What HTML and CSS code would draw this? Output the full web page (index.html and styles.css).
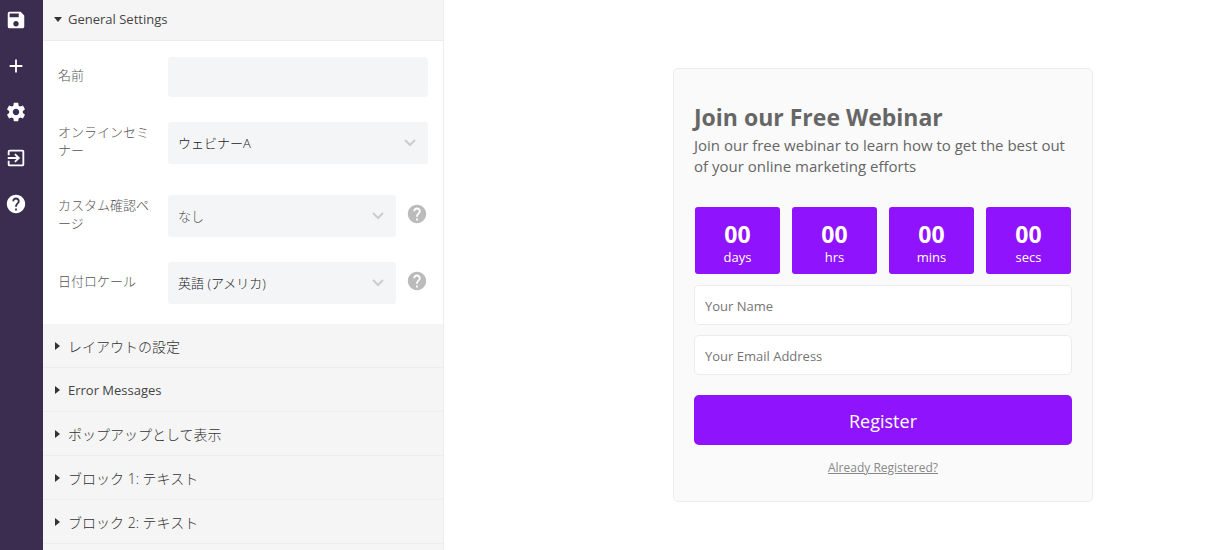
FILE: index.html
```html
<!DOCTYPE html>
<html lang="ja">
<head>
    <meta charset="UTF-8">
    <meta name="viewport" content="width=device-width, initial-scale=1.0">
    <title>Webinar Form Editor</title>
    <link rel="stylesheet" href="styles.css">
</head>
<body>
    <div class="editor">
        <nav class="toolbar">
            <button type="button" aria-label="Save">
                <svg class="icon" viewBox="0 0 24 24"><path d="M17 3H5a2 2 0 0 0-2 2v14a2 2 0 0 0 2 2h14c1.100 0 2-.9 2-2V7l-4-4zm-5 16c-1.660 0-3-1.340-3-3s1.340-3 3-3 3 1.340 3 3-1.340 3-3 3zm3-10H5V5h10v4z"/></svg>
            </button>
            <button type="button" aria-label="Add">
                <svg class="icon" viewBox="0 0 24 24"><path d="M19 13h-6v6h-2v-6H5v-2h6V5h2v6h6v2z"/></svg>
            </button>
            <button type="button" aria-label="Settings">
                <svg class="icon" viewBox="0 0 24 24"><path d="M19.430 12.980c.04-.32.07-.64.07-.98s-.03-.66-.07-.98l2.110-1.650c.19-.15.24-.42.12-.64l-2-3.460c-.12-.22-.39-.3-.61-.22l-2.490 1c-.52-.4-1.080-.73-1.690-.98l-.38-2.650C14.460 2.180 14.250 2 14 2h-4c-.25 0-.46.18-.49.42l-.38 2.650c-.61.25-1.170.59-1.690.98l-2.490-1c-.23-.09-.49 0-.61.22l-2 3.460c-.13.22-.07.49.12.64l2.110 1.650c-.04.32-.07.65-.07.98s.03.66.07.98l-2.110 1.650c-.19.15-.24.42-.12.64l2 3.460c.12.22.39.3.61.22l2.490-1c.52.4 1.080.73 1.690.98l.38 2.650c.03.24.24.42.49.42h4c.25 0 .46-.18.49-.42l.38-2.650c.61-.25 1.170-.59 1.690-.98l2.490 1c.23.09.49 0 .61-.22l2-3.460c.12-.22.07-.49-.12-.64l-2.110-1.650zM12 15.500c-1.930 0-3.500-1.570-3.500-3.500s1.570-3.500 3.500-3.500 3.500 1.570 3.500 3.500-1.570 3.500-3.500 3.500z"/></svg>
            </button>
            <button type="button" aria-label="Exit">
                <svg class="icon" viewBox="0 0 24 24"><path d="M10.090 15.590L11.500 17l5-5-5-5-1.410 1.410L12.670 11H3v2h9.670l-2.580 2.590zM19 3H5a2 2 0 0 0-2 2v4h2V5h14v14H5v-4H3v4a2 2 0 0 0 2 2h14c1.100 0 2-.9 2-2V5c0-1.100-.9-2-2-2z"/></svg>
            </button>
            <button type="button" aria-label="Help">
                <svg class="icon" viewBox="0 0 24 24"><path d="M12 2C6.480 2 2 6.480 2 12s4.480 10 10 10 10-4.480 10-10S17.520 2 12 2zm1 17h-2v-2h2v2zm2.070-7.750l-.9.920C13.450 12.900 13 13.500 13 15h-2v-.5c0-1.100.45-2.100 1.170-2.830l1.240-1.260c.37-.36.59-.86.59-1.410 0-1.100-.9-2-2-2s-2 .9-2 2H8c0-2.210 1.790-4 4-4s4 1.790 4 4c0 .88-.36 1.680-.93 2.250z"/></svg>
            </button>
        </nav>

        <aside class="panel">
            <details open>
                <summary lang="en">General Settings</summary>
                <div class="settings">
                    <div class="group">
                        <div class="field">
                            <label for="name">名前</label>
                            <input type="text" id="name" name="name">
                        </div>
                        <div class="field">
                            <label for="webinar">オンラインセミナー</label>
                            <div class="select">
                                <select id="webinar" name="webinar">
                                    <option>ウェビナーA</option>
                                </select>
                                <svg class="chevron" viewBox="0 0 14 10"><path d="M2 2l5 5 5-5"/></svg>
                            </div>
                        </div>
                    </div>
                    <div class="group">
                        <div class="field">
                            <label for="confirm">カスタム確認ページ</label>
                            <div class="select">
                                <select id="confirm" name="confirm" class="empty">
                                    <option>なし</option>
                                </select>
                                <svg class="chevron" viewBox="0 0 14 10"><path d="M2 2l5 5 5-5"/></svg>
                            </div>
                            <button type="button" class="help" aria-label="Help">
                                <svg class="icon" viewBox="0 0 24 24"><path d="M12 2C6.480 2 2 6.480 2 12s4.480 10 10 10 10-4.480 10-10S17.520 2 12 2zm1 17h-2v-2h2v2zm2.070-7.750l-.9.920C13.450 12.900 13 13.500 13 15h-2v-.5c0-1.100.45-2.100 1.170-2.830l1.240-1.260c.37-.36.59-.86.59-1.410 0-1.100-.9-2-2-2s-2 .9-2 2H8c0-2.210 1.790-4 4-4s4 1.790 4 4c0 .88-.36 1.680-.93 2.250z"/></svg>
                            </button>
                        </div>
                        <div class="field">
                            <label for="locale">日付ロケール</label>
                            <div class="select">
                                <select id="locale" name="locale">
                                    <option>英語 (アメリカ)</option>
                                </select>
                                <svg class="chevron" viewBox="0 0 14 10"><path d="M2 2l5 5 5-5"/></svg>
                            </div>
                            <button type="button" class="help" aria-label="Help">
                                <svg class="icon" viewBox="0 0 24 24"><path d="M12 2C6.480 2 2 6.480 2 12s4.480 10 10 10 10-4.480 10-10S17.520 2 12 2zm1 17h-2v-2h2v2zm2.070-7.750l-.9.920C13.450 12.900 13 13.500 13 15h-2v-.5c0-1.100.45-2.100 1.170-2.830l1.240-1.260c.37-.36.59-.86.59-1.410 0-1.100-.9-2-2-2s-2 .9-2 2H8c0-2.210 1.790-4 4-4s4 1.790 4 4c0 .88-.36 1.680-.93 2.250z"/></svg>
                            </button>
                        </div>
                    </div>
                </div>
            </details>
            <details><summary>レイアウトの設定</summary></details>
            <details><summary lang="en">Error Messages</summary></details>
            <details><summary>ポップアップとして表示</summary></details>
            <details><summary>ブロック 1: テキスト</summary></details>
            <details><summary>ブロック 2: テキスト</summary></details>
        </aside>

        <main class="preview">
            <form class="card">
                <h1>Join our Free Webinar</h1>
                <p>Join our free webinar to learn how to get the best out of your online marketing efforts</p>
                <div class="countdown">
                    <div class="unit"><strong>00</strong><span>days</span></div>
                    <div class="unit"><strong>00</strong><span>hrs</span></div>
                    <div class="unit"><strong>00</strong><span>mins</span></div>
                    <div class="unit"><strong>00</strong><span>secs</span></div>
                </div>
                <input type="text" name="visitor" placeholder="Your Name" aria-label="Your Name">
                <input type="email" name="email" placeholder="Your Email Address" aria-label="Your Email Address">
                <button type="submit" class="register">Register</button>
                <a href="#" class="already">Already Registered?</a>
            </form>
        </main>
    </div>
</body>
</html>
```
FILE: styles.css
```css
* {
    box-sizing: border-box;
}
body {
    margin: 0;
    font-family: "Open Sans", "Noto Sans CJK JP", sans-serif;
    font-size: 13px;
    background: #fff;
}
input, select, button {
    font: inherit;
}
button {
    padding: 0;
    border: none;
    background: none;
    cursor: pointer;
}
.editor {
    display: flex;
    height: 100vh;
    overflow: hidden;
}
.icon {
    display: block;
    width: 22px;
    height: 22px;
    fill: currentColor;
}

/* left toolbar */
.toolbar {
    flex: 0 0 43px;
    display: flex;
    flex-direction: column;
    align-items: flex-start;
    gap: 24px;
    padding: 9px 5px;
    background: #3a2d50;
}
.toolbar button {
    color: #fff;
}

/* settings panel */
.panel {
    flex: 0 0 401px;
    overflow: hidden;
    border-right: 1px solid #ececec;
    background: #f5f5f5;
    font-weight: 300;
}
summary {
    display: flex;
    align-items: center;
    gap: 6px;
    height: 44px;
    padding-left: 10px;
    border-bottom: 1px solid #ececec;
    color: #333;
    font-size: 14px;
    cursor: pointer;
}
summary:lang(en) {
    font-size: 13px;
    font-weight: 400;
    color: #444;
}
summary::before {
    content: "";
    width: 0;
    margin: 0 2px;
    border: 4px solid transparent;
    border-left: 5px solid #333;
    border-right: 0;
}
details[open] > summary {
    height: 41px;
    padding-bottom: 2px;
}
details[open] > summary::before {
    margin: 0 0 0 1px;
    border: 4px solid transparent;
    border-top: 5px solid #333;
    border-bottom: 0;
}
.settings {
    display: grid;
    gap: 31px;
    padding: 16px 15px 20px;
    background: #fff;
}
.group {
    display: grid;
    gap: 25px;
}
.field {
    display: flex;
    align-items: center;
}
.field label {
    flex: 0 0 95px;
    margin: 0 15px 4px 0;
    color: #555;
    line-height: 18px;
    line-break: anywhere;
}
.field input, .field select {
    width: 100%;
    height: 42px;
    padding: 0 10px;
    border: none;
    border-radius: 3px;
    background: #f4f5f7;
    color: #222;
}
.field input {
    height: 40px;
    border-radius: 4px;
}
.field select {
    grid-area: 1 / 1;
    appearance: none;
}
.field select.empty {
    color: #555;
}
.select {
    flex: 1;
    display: grid;
    align-items: center;
}
.chevron {
    grid-area: 1 / 1;
    justify-self: end;
    width: 14px;
    height: 10px;
    margin-right: 11px;
    fill: none;
    stroke: #ccc;
    stroke-width: 2;
    pointer-events: none;
}
.help {
    margin: 0 0 4px 10px;
    color: #bbb;
}

/* form preview */
.preview {
    flex: 1;
    padding: 68px 0 0 97px;
}
.card {
    display: flex;
    flex-direction: column;
    max-width: 420px;
    margin: 0 auto;
    padding: 30px 20px 24px;
    border: 1px solid #ececec;
    border-radius: 5px;
    background: #fafafa;
    color: #666;
}
.card h1 {
    margin: 0;
    font-size: 23px;
    line-height: 36px;
}
.card p {
    margin: 0 0 30px;
    font-size: 15px;
    line-height: 21px;
}
.countdown {
    display: grid;
    grid-template-columns: repeat(4, 1fr);
    gap: 12px;
    margin: 0 1px 11px;
}
.unit {
    display: grid;
    padding: 15px 0 7px;
    border-radius: 3px;
    background: #9013fe;
    color: #fff;
    text-align: center;
}
.unit strong {
    font-size: 23px;
    line-height: 25px;
}
.unit span {
    line-height: 20px;
}
.card input {
    height: 40px;
    margin-bottom: 10px;
    padding: 2px 10px 0;
    border: 1px solid #ececec;
    border-radius: 5px;
    background: #fff;
}
.card input::placeholder {
    color: #757575;
}
.register {
    height: 50px;
    margin-top: 10px;
    padding-top: 2px;
    border-radius: 5px;
    background: #9013fe;
    color: #fff;
    font-size: 18px;
}
.already {
    align-self: center;
    margin-top: 14px;
    color: #888;
    font-size: 12px;
    line-height: 18px;
}
```
